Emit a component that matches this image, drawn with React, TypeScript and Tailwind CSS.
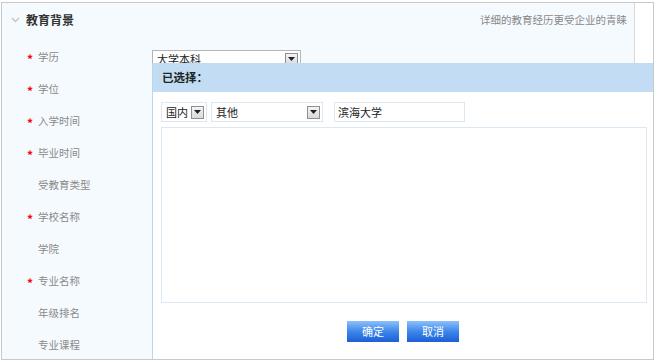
import React from "react";

const font = { fontFamily: '"Noto Sans CJK SC", "Liberation Sans", sans-serif' };

function Arrow() {
  return (
    <span className="flex h-[13px] w-[13px] items-center justify-center border border-[#8f8f8f] bg-gradient-to-b from-[#f4f4f4] to-[#d9d9d9]">
      <svg width="7" height="4" viewBox="0 0 7 4">
        <path d="M0 0h7L3.5 4z" fill="#222" />
      </svg>
    </span>
  );
}

const rows = [
  { label: "学历", req: true },
  { label: "学位", req: true },
  { label: "入学时间", req: true },
  { label: "毕业时间", req: true },
  { label: "受教育类型", req: false },
  { label: "学校名称", req: true },
  { label: "学院", req: false },
  { label: "专业名称", req: true },
  { label: "年级排名", req: false },
  { label: "专业课程", req: false },
];

export default function App() {
  return (
    <div className="h-[363px] w-[655px] bg-white pl-[1px] pt-[2px]" style={font}>
      <div className="relative flex h-[358px] w-[653px] overflow-hidden border border-[#c9c9c9] bg-[#f5faff]">
        <div className="flex-1">
          <div className="flex h-[34px] items-center justify-between pl-[9px] pr-[7px]">
            <div className="flex items-center gap-[6px]">
              <svg width="9" height="6" viewBox="0 0 9 6">
                <path d="M1 1l3.5 3.5L8 1" stroke="#c4c4c4" strokeWidth="1.4" fill="none" />
              </svg>
              <span className="text-[12px] font-bold text-[#333]">教育背景</span>
            </div>
            <span className="text-[10.5px] text-[#888]">详细的教育经历更受企业的青睐</span>
          </div>
          <div className="mt-[4px]">
            {rows.map((r, i) => (
              <div key={r.label} className="flex h-[32px] items-center">
                <div className="flex w-[150px] items-center pl-[25px]">
                  <span className="w-[11px] pt-[3px] text-[12px] font-bold leading-none text-[#ff0000]">
                    {r.req ? "*" : ""}
                  </span>
                  <span className="text-[10.5px] text-[#8a8a8a]">{r.label}</span>
                </div>
                {i === 0 && (
                  <div className="mt-[4px] flex h-[18px] w-[149px] items-center justify-between border border-[#b5b5b5] bg-white pl-[4px] pr-[2px] text-[11px] text-[#222]">
                    <span>大学本科</span>
                    <Arrow />
                  </div>
                )}
              </div>
            ))}
          </div>
        </div>
        <div className="w-[19px] border-l border-[#d8d8d8] bg-white" />

        <div className="absolute bottom-0 left-[150px] right-0 top-[60px] border-l border-[#bcd6ec] bg-white">
          <div className="flex h-[29px] items-center bg-[#c2ddf3] pl-[9px] text-[11.5px] font-bold text-[#222]">
            已选择：
          </div>
          <div className="pl-[8px]">
            <div className="mt-[10px] flex h-[20px] items-center">
              <div className="flex h-[20px] w-[46px] items-center justify-between border border-[#dde8f2] pl-[4px] pr-[2px] text-[11px] text-[#222]">
                <span>国内</span>
                <Arrow />
              </div>
              <div className="ml-[4px] flex h-[20px] w-[112px] items-center justify-between border border-[#dde8f2] pl-[4px] pr-[2px] text-[11px] text-[#222]">
                <span>其他</span>
                <Arrow />
              </div>
              <div className="ml-[11px] flex h-[20px] w-[131px] items-center border border-[#dde8f2] pl-[3px] text-[11px] text-[#222]">
                滨海大学
              </div>
            </div>
            <div className="mt-[5px] h-[176px] w-[486px] border border-[#dbe8f4]" />
          </div>
          <div className="mt-[18px] flex justify-center gap-[8px]">
            {["确定", "取消"].map((t) => (
              <button
                key={t}
                className="flex h-[21px] w-[52px] items-center justify-center bg-gradient-to-b from-[#8cc0fa] via-[#3d86ea] to-[#1c5fd6] text-[11px] text-white"
              >
                {t}
              </button>
            ))}
          </div>
        </div>
      </div>
    </div>
  );
}
